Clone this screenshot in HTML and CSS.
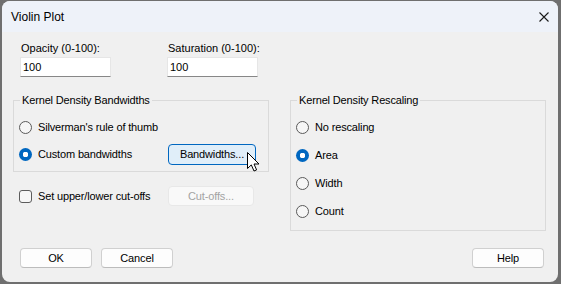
FILE: index.html
```html
<!DOCTYPE html>
<html>
<head>
<meta charset="utf-8">
<link rel="stylesheet" href="styles.css">
</head>
<body>
<div class="window">
  <div class="titlebar">
    <span class="title">Violin Plot</span>
    <svg class="close" width="10" height="10" viewBox="0 0 10 10"><path d="M0.5 0.5 L9.5 9.5 M9.5 0.5 L0.5 9.5" stroke="#1a1a1a" stroke-width="1.1" fill="none"/></svg>
  </div>
  <div class="content">
    <div class="fields">
      <div class="field">
        <div class="label">Opacity (0-100):</div>
        <div class="input">100</div>
      </div>
      <div class="field field-sat">
        <div class="label">Saturation (0-100):</div>
        <div class="input">100</div>
      </div>
    </div>
    <div class="middle">
      <div class="left-col">
        <div class="group group-bw">
          <span class="group-title">Kernel Density Bandwidths</span>
          <div class="opt"><span class="radio"></span><span class="txt">Silverman's rule of thumb</span></div>
          <div class="opt"><span class="radio checked"></span><span class="txt">Custom bandwidths</span><span class="btn btn-focus btn-bw">Bandwidths...</span></div>
        </div>
        <div class="check-row">
          <span class="checkbox"></span><span class="txt">Set upper/lower cut-offs</span>
          <span class="btn btn-disabled btn-cut">Cut-offs...</span>
        </div>
      </div>
      <div class="group group-rs">
        <span class="group-title">Kernel Density Rescaling</span>
        <div class="opt"><span class="radio"></span><span class="txt">No rescaling</span></div>
        <div class="opt"><span class="radio checked"></span><span class="txt">Area</span></div>
        <div class="opt"><span class="radio"></span><span class="txt">Width</span></div>
        <div class="opt"><span class="radio"></span><span class="txt">Count</span></div>
      </div>
    </div>
    <div class="buttons">
      <span class="btn btn-dlg">OK</span>
      <span class="btn btn-dlg">Cancel</span>
      <span class="spacer"></span>
      <span class="btn btn-dlg btn-help">Help</span>
    </div>
  </div>
  <svg class="cursor" width="14" height="21" viewBox="0 0 14 21">
    <path d="M0.5 0.5 L0.5 16.5 L4.3 12.9 L7 19 L9.6 17.9 L7 12 L12 12 Z" fill="#fff" stroke="#000" stroke-width="1" stroke-linejoin="miter"/>
  </svg>
</div>
</body>
</html>
```
FILE: styles.css
```css
html, body {
  margin: 0;
  padding: 0;
}
body {
  background: #6f6f6f;
  width: 561px;
  height: 284px;
  overflow: hidden;
  font-family: "Liberation Sans", Arial, sans-serif;
  font-size: 11px;
  letter-spacing: -0.15px;
  color: #000;
}
.window {
  position: relative;
  margin: 1px 0 0 2px;
  width: 556px;
  height: 281px;
  background: #f0f0f0;
  border-radius: 8px;
  overflow: hidden;
}
.titlebar {
  height: 31px;
  background: #eef2f9;
  display: flex;
  align-items: center;
  padding: 0 9px;
}
.title {
  font-size: 12px;
  letter-spacing: 0;
  color: #000;
  flex: 1;
}
.content {
  padding: 10px 12px 0 11px;
}
.fields {
  display: flex;
  margin-left: 7px;
}
.field {
  display: flex;
  flex-direction: column;
  width: 91px;
}
.field-sat {
  margin-left: 56px;
}
.label {
  height: 13px;
  line-height: 13px;
  padding-left: 1px;
  white-space: nowrap;
  letter-spacing: 0;
}
.input {
  margin-top: 2px;
  height: 20px;
  box-sizing: border-box;
  background: #fff;
  border: 1px solid #e6e6e6;
  border-bottom-color: #878787;
  padding-left: 2px;
  line-height: 18px;
  letter-spacing: 0;
}
.middle {
  display: flex;
  margin-top: 23px;
  align-items: flex-start;
}
.left-col {
  width: 256px;
}
.group {
  position: relative;
  box-sizing: border-box;
  border: 1px solid #dadada;
}
.group-title {
  position: absolute;
  top: -7px;
  left: 6px;
  padding: 0 2px;
  background: #f0f0f0;
  line-height: 13px;
  white-space: nowrap;
}
.group-bw {
  width: 256px;
  height: 72px;
  padding: 16px 12px 0 5px;
}
.group-rs {
  margin-left: 21px;
  width: 256px;
  height: 131px;
  padding: 16px 8px 0 5px;
}
.opt {
  display: flex;
  align-items: center;
  height: 20px;
}
.txt {
  white-space: nowrap;
}
.group-bw .opt + .opt {
  margin-top: 7px;
}
.group-rs .opt + .opt {
  margin-top: 8px;
}
.radio {
  width: 13px;
  height: 13px;
  box-sizing: border-box;
  border-radius: 50%;
  border: 1px solid #5a5a5a;
  background: #f6f6f6;
  margin-right: 6px;
  flex: none;
}
.radio.checked {
  border: none;
  background: radial-gradient(circle, #fff 0 2.6px, #0067c0 3px);
}
.btn {
  display: flex;
  align-items: center;
  justify-content: center;
  box-sizing: border-box;
  height: 20px;
  border-radius: 4px;
  border: 1px solid #d0d0d0;
  border-bottom-color: #bcbcbc;
  background: #fdfdfd;
  white-space: nowrap;
}
.btn-bw {
  margin-left: auto;
  width: 88px;
  height: 21px;
  background: #e0eef9;
  border: 1px solid #0067c0;
}
.check-row {
  display: flex;
  align-items: center;
  height: 20px;
  margin-top: 14px;
  padding-left: 6px;
}
.checkbox {
  width: 13px;
  height: 13px;
  box-sizing: border-box;
  border: 1px solid #5c5c5c;
  border-radius: 3px;
  background: #f7f7f7;
  margin-right: 6px;
  flex: none;
}
.btn-disabled {
  margin-left: auto;
  margin-right: 15px;
  width: 86px;
  background: #f9f9f9;
  border: 1px solid #e8e8e8;
  color: #a3a3a3;
}
.buttons {
  display: flex;
  margin-top: 17px;
  padding-left: 7px;
}
.btn-dlg {
  width: 72px;
}
.btn-dlg + .btn-dlg {
  margin-left: 9px;
}
.spacer {
  flex: 1;
}
.btn-help {
  margin-right: 2px;
}
.cursor {
  position: absolute;
  left: 245px;
  top: 151px;
}
```
